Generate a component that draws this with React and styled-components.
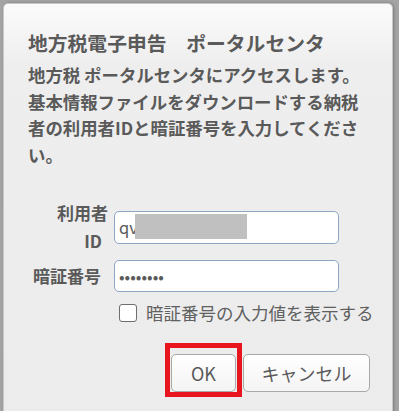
import { createGlobalStyle, styled } from "styled-components";

const GlobalStyle = createGlobalStyle`
  html, body {
    margin: 0;
    padding: 0;
    background: #a4a4a4;
    overflow: hidden;
  }
  body {
    font-family: "Noto Sans CJK JP", "Noto Sans", sans-serif;
    color: #555;
  }
`;

const Page = styled.div`
  height: 411px;
  padding: 3px 0 0 3px;
  box-sizing: border-box;
`;

const Dialog = styled.div`
  width: 390px;
  height: 420px;
  box-sizing: border-box;
  padding: 24px 22px 0 24px;
  border-radius: 5px 5px 0 0;
  border: 1px solid #c8c8c8;
  background: linear-gradient(#fbfbfb 0px, #eeeeee 60px, #ececec 100%);
  box-shadow: 1px 0 3px rgba(0, 0, 0, 0.25);
`;

const Title = styled.h1`
  margin: 0;
  font-size: 19.8px;
  line-height: 30px;
  font-weight: 700;
  color: #5a5a5a;
  white-space: nowrap;
`;

const Message = styled.p`
  margin: 4px 0 0;
  font-size: 17.4px;
  line-height: 26.5px;
  font-weight: 700;
  color: #5a5a5a;
  white-space: nowrap;
`;

const Form = styled.div`
  margin-top: 31px;
  display: grid;
  grid-template-columns: 80px 225px;
  column-gap: 6px;
  row-gap: 5px;
  align-items: center;
`;

const Label = styled.label`
  font-size: 17px;
  line-height: 28px;
  font-weight: 700;
  color: #5a5a5a;
  text-align: right;
  display: flex;
  flex-direction: column;
  align-items: flex-end;
`;

const LabelLine = styled.span`
  padding-right: ${({ $inset }) => $inset || 0}px;
`;

const Field = styled.div`
  position: relative;
  height: ${({ $h }) => $h}px;
`;

const TextInput = styled.input`
  width: 100%;
  height: 100%;
  box-sizing: border-box;
  padding: 0 4px;
  border: 1px solid #8ea6c4;
  border-radius: 5px;
  background: #fff;
  font-family: "Noto Sans CJK JP", "Noto Sans", sans-serif;
  font-size: 16.5px;
  color: #5a5a5a;
  outline: none;
`;

const Redaction = styled.span`
  position: absolute;
  left: 21px;
  top: 3px;
  width: 112px;
  height: 25px;
  background: #c0c0c0;
`;

const CheckRow = styled.label`
  grid-column: 2;
  margin-top: 5px;
  margin-left: 5px;
  display: flex;
  align-items: center;
  gap: 9px;
  font-size: 17.5px;
  line-height: 22px;
  color: #606060;
  white-space: nowrap;
`;

const Check = styled.input`
  appearance: none;
  flex: 0 0 auto;
  margin: 0;
  width: 18px;
  height: 18px;
  box-sizing: border-box;
  border: 1.5px solid #6e6e6e;
  border-radius: 3px;
  background: #fff;
`;

const Buttons = styled.div`
  margin-top: 30px;
  display: flex;
  justify-content: flex-end;
  gap: 7px;
`;

const Highlight = styled.div`
  position: relative;
`;

const Frame = styled.span`
  position: absolute;
  left: -6px;
  right: -6px;
  top: -11px;
  bottom: -5px;
  border: 5px solid #e8141e;
  pointer-events: none;
`;

const Button = styled.button`
  width: ${({ $w }) => $w}px;
  height: 38px;
  box-sizing: border-box;
  border: 1px solid #a8a8a8;
  border-radius: 5px;
  background: linear-gradient(#ffffff, #f4f4f4);
  font-family: "Noto Sans CJK JP", "Noto Sans", sans-serif;
  font-size: 18px;
  color: #5a5a5a;
  padding: 0;
`;

export default function App() {
  return (
    <Page>
      <GlobalStyle />
      <Dialog>
        <Title>地方税電子申告　ポータルセンタ</Title>
        <Message>
          地方税 ポータルセンタにアクセスします。
          <br />
          基本情報ファイルをダウンロードする納税
          <br />
          者の利用者IDと暗証番号を入力してくださ
          <br />
          い。
        </Message>
        <Form>
          <Label htmlFor="uid">
            <LabelLine>利用者</LabelLine>
            <LabelLine $inset={6}>ID</LabelLine>
          </Label>
          <Field $h={33}>
            <TextInput id="uid" type="text" defaultValue="qv" />
            <Redaction />
          </Field>
          <Label htmlFor="pin">
            <LabelLine $inset={7}>暗証番号</LabelLine>
          </Label>
          <Field $h={32}>
            <TextInput id="pin" type="password" defaultValue="12345678" />
          </Field>
          <CheckRow>
            <Check type="checkbox" />
            暗証番号の入力値を表示する
          </CheckRow>
        </Form>
        <Buttons>
          <Highlight>
            <Button $w={65}>OK</Button>
            <Frame />
          </Highlight>
          <Button $w={127}>キャンセル</Button>
        </Buttons>
      </Dialog>
    </Page>
  );
}
